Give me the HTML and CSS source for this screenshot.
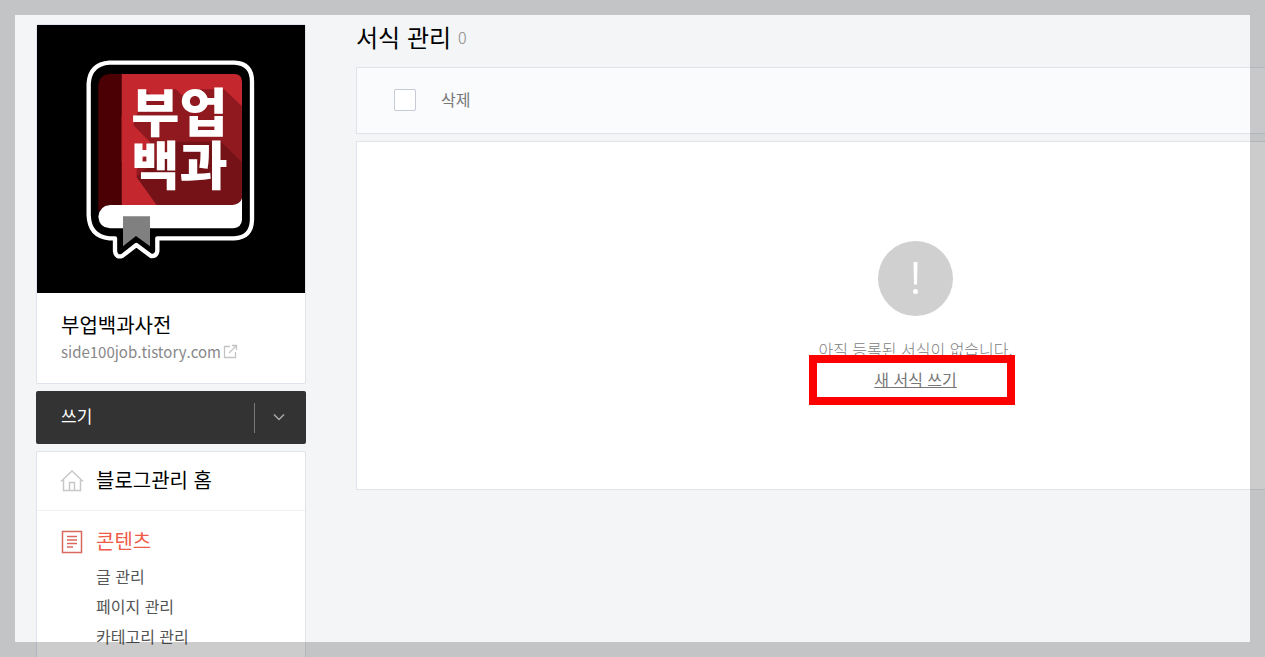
FILE: index.html
```html
<!DOCTYPE html>
<html lang="ko">
<head>
<meta charset="utf-8">
<title>서식 관리</title>
<link rel="stylesheet" href="styles.css">
</head>
<body>
<div class="layout">
  <aside class="sidebar">
    <section class="profile">
      <svg class="profile-image" viewBox="3 30 804 804" role="img" aria-label="부업백과">
        <rect x="3" y="30" width="804" height="804" fill="#000"/>
        <path d="M220 143H595Q648 145 648 200V615Q646 668 595 670H364V708Q362 724 345 723L301 690L260 722Q240 730 237 708V670H220Q160 664 158 600V205Q162 148 220 143Z" fill="#000" stroke="#fff" stroke-width="13" stroke-linejoin="round"/>
        <path d="M187 215Q187 177 225 177H257V570H220Q198 574 187 592Z" fill="#4b0003"/>
        <path d="M257 177H595Q618 177 618 200V550L595 570H257Z" fill="#c4272e"/>
        <path d="M328 223L350 246H395V223H420L440 242L470 223H564L618 274V550L595 570H362L302 486V465L340 400L292 330Z" fill="#8f191f"/>
        <path d="M302 486L424 380H555L618 442V550Q610 568 595 570H362Z" fill="#751217"/>
        <path d="M292 330L345 385H300V486L257 440V300Z" fill="#c4272e"/>
        <path d="M222 570H590Q612 568 618 550V615Q616 638 592 640H222Q190 638 187 605Q190 573 222 570Z" fill="#fff"/>
        <path d="M261 604H342V694L300 663L261 694Z" fill="#808080"/>
        <text class="logo-text" x="286" y="350">부업</text>
        <text class="logo-text" x="286" y="509">백과</text>
      </svg>
      <div class="profile-info">
        <strong class="blog-name">부업백과사전</strong>
        <a class="blog-link" href="#">side100job.tistory.com
          <svg class="external-icon" viewBox="0 0 15 15" aria-hidden="true"><path d="M7 2.5H1.5V13.500H12.500V8M6 9L13 2M9 1.500H13.500V6"/></svg>
        </a>
      </div>
    </section>
    <div class="write-bar">
      <button class="write-button" type="button">쓰기</button>
      <button class="write-more" type="button" aria-label="더보기">
        <svg class="chevron" viewBox="0 0 12 8" aria-hidden="true"><path d="M1 1.500L6 6.500L11 1.500"/></svg>
      </button>
    </div>
    <nav class="menu">
      <a class="menu-head menu-home" href="#">
        <svg class="menu-icon" viewBox="0 0 24 24" aria-hidden="true"><path d="M1 12.500L12 2L23 12.500M3.500 11V21.500H20.500V11M9.500 21V13.500H14.500V21"/></svg>
        <span class="menu-label">블로그관리 홈</span>
      </a>
      <div class="menu-group">
        <a class="menu-head menu-current" href="#">
          <svg class="menu-icon" viewBox="0 0 24 24" aria-hidden="true"><path d="M2.500 1.500H21.500V22.500H2.500ZM7 6.500H17M7 10H17M7 13.500H17M7 17H13"/></svg>
          <span class="menu-label">콘텐츠</span>
        </a>
        <ul class="menu-list">
          <li><a href="#">글 관리</a></li>
          <li><a href="#">페이지 관리</a></li>
          <li><a href="#">카테고리 관리</a></li>
        </ul>
      </div>
    </nav>
  </aside>
  <main class="content">
    <h1 class="title">서식 관리 <span class="count">0</span></h1>
    <div class="toolbar">
      <input class="check" type="checkbox" aria-label="전체 선택">
      <button class="delete" type="button">삭제</button>
    </div>
    <section class="empty">
      <svg class="empty-icon" viewBox="0 0 75 75" aria-hidden="true"><circle cx="37.500" cy="37.500" r="37.500" fill="#d0d0d0"/><path d="M35.500 21H39.500L39 43.500H36Z" fill="#fff"/><circle cx="37.500" cy="50.500" r="2.500" fill="#fff"/></svg>
      <p class="empty-text">아직 등록된 서식이 없습니다.</p>
      <div class="new-row"><a class="new-link" href="#">새 서식 쓰기</a><span class="highlight"></span></div>
    </section>
  </main>
</div>
<div class="frame"></div>
</body>
</html>
```
FILE: styles.css
```css
* { box-sizing: border-box; }
html, body { height: 100%; }
body {
  margin: 0;
  overflow: hidden;
  background: #f3f5f7;
  color: #000;
  font-family: "Noto Sans CJK KR", sans-serif;
  font-size: 16px;
}
a { color: inherit; text-decoration: none; }
button { margin: 0; padding: 0; border: 0; background: none; font: inherit; color: inherit; }
svg { display: block; }

.layout { display: flex; gap: 50px; padding: 24px 0 0 36px; }
.sidebar { flex: none; width: 270px; display: flex; flex-direction: column; gap: 7px; }

.profile { background: #fff; border: 1px solid #dfe3ea; border-radius: 2px; }
.profile-image { width: 100%; }
.logo-text { font-weight: 900; font-size: 157px; fill: #fff; }
.profile-info { padding: 18px 24px 19px; }
.blog-name { display: block; font-size: 20px; font-weight: 400; line-height: 28px; }
.blog-link { display: flex; align-items: center; gap: 2px; font-size: 15px; line-height: 25px; color: #888; }
.external-icon { width: 15px; height: 15px; fill: none; stroke: #c4c4c4; stroke-width: 1.3; }

.write-bar { display: flex; align-items: center; height: 53px; background: #333; border-radius: 2px; color: #fff; }
.write-button { flex: 1; padding: 0 0 4px 25px; text-align: left; line-height: 48px; font-size: 17px; }
.write-more { display: grid; place-items: center; width: 52px; height: 30px; padding: 0 3px 2px 0; border-left: 1px solid #777; }
.chevron { width: 12px; height: 8px; fill: none; stroke: #aaa; stroke-width: 1.5; }

.menu { background: #fff; border: 1px solid #dfe3ea; border-radius: 2px; }
.menu-head { display: flex; align-items: center; gap: 12px; padding-left: 23px; font-size: 20px; }
.menu-label { padding-bottom: 3px; line-height: 28px; }
.menu-home { height: 59px; border-bottom: 1px solid #f0f1f3; }
.menu-icon { width: 24px; height: 24px; fill: none; stroke: #c8c8c8; stroke-width: 1.5; }
.menu-group { padding: 15px 0 24px; }
.menu-current { height: 32px; color: #ef5b48; }
.menu-current .menu-icon { stroke: #d8695c; }
.menu-list { margin: 3px 0 0; padding: 0 0 0 59px; list-style: none; line-height: 30px; color: #555; }

/* The list panel runs past the right edge of the window. */
.content { flex: 1; margin-right: -210px; }
.title { display: flex; align-items: center; gap: 7px; height: 28px; margin: 0 0 15px; padding-bottom: 2px; font-size: 24px; font-weight: 400; line-height: 28px; }
.count { font-size: 16px; color: #888; font-weight: 300; }
.toolbar { display: flex; align-items: center; gap: 25px; height: 67px; padding: 0 0 2px 37px; background: #fafbfd; border: 1px solid #dfe3ea; color: #777; }
.check { appearance: none; width: 22px; height: 22px; margin: 0; border: 1px solid #c5cad4; border-radius: 2px; background: #fff; }
.delete { padding-bottom: 2px; }
.empty { display: flex; flex-direction: column; align-items: center; margin-top: 7px; padding: 99px 0 95px; background: #fff; border: 1px solid #dfe3ea; }
.empty-icon { width: 75px; height: 75px; }
.empty-text { margin: 18px 0 0; line-height: 30px; color: #808080; font-weight: 300; }
.new-row { position: relative; line-height: 30px; color: #777; }
.new-link { text-decoration: underline; }
.highlight { position: absolute; left: -65px; right: -58px; top: -9px; height: 50px; border: 8px solid #fd0000; }

.frame { position: fixed; inset: 0; border: 15px solid rgba(0, 0, 0, 0.2); pointer-events: none; }
```
